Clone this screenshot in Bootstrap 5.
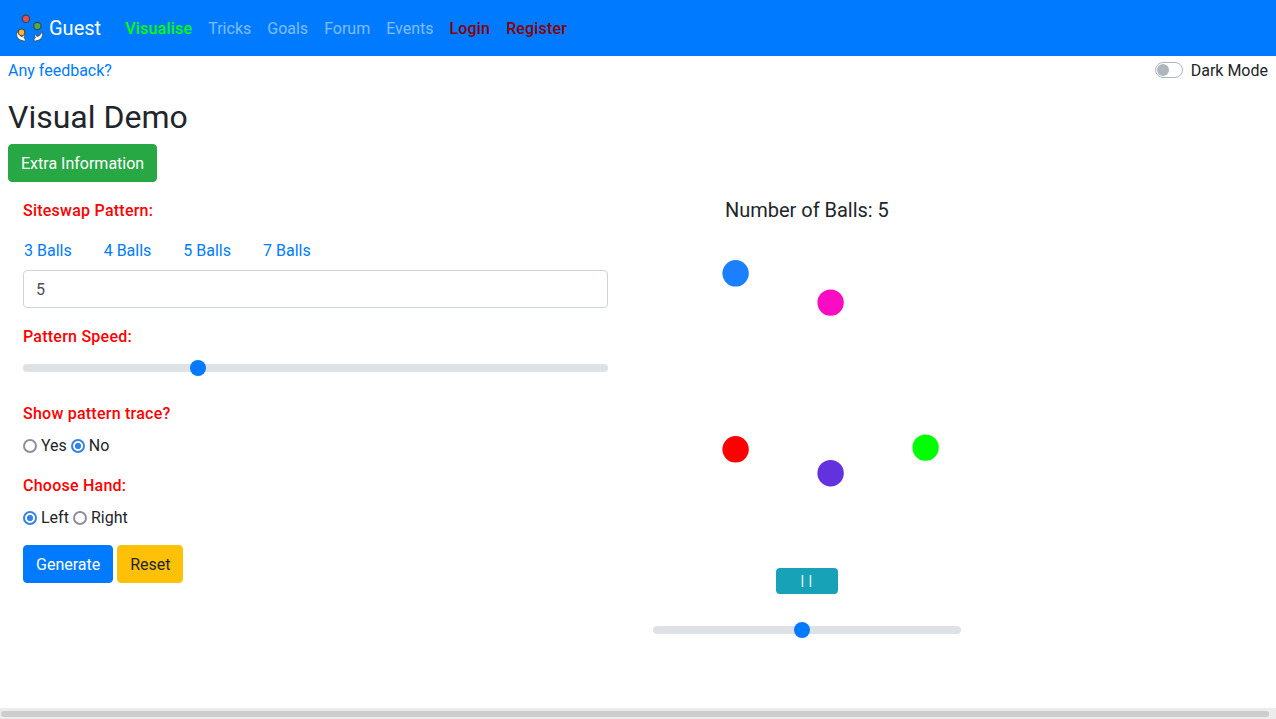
<!DOCTYPE html>
<html lang="en">
<head>
<meta charset="utf-8">
<meta name="viewport" content="width=device-width, initial-scale=1">
<title>Visual Demo</title>
<link rel="stylesheet" href="https://cdn.jsdelivr.net/npm/bootstrap@5.3.0/dist/css/bootstrap.min.css">
<style>
  body { font-family: Roboto, sans-serif; color: #212529; height: 100vh; overflow: hidden; }
  a { color: #007bff; text-decoration: none; }
  .topbar { background: #007bff; height: 56px; padding: 0 16px; }
  .topbar .navbar-brand { color: #fff; font-size: 20px; line-height: 30px; margin-right: 16px; }
  .topbar .navbar-brand svg { margin-right: 5px; }
  .topbar .navbar-nav .nav-link { color: rgba(255,255,255,.5); padding: 9px 8px 7px; }
  .topbar .navbar-nav .nav-link.current { color: #0f0; font-weight: 500; letter-spacing: .22px; }
  .topbar .navbar-nav .nav-link.account { color: #8b0000; font-weight: 500; letter-spacing: .16px; }
  .topline { height: 42px; padding-top: 3px; }
  .toggle { width: 28px; height: 16px; border: 1px solid #adb5bd; border-radius: 8px; padding: 1px; margin-top: -2px; }
  .toggle::before { content: ""; display: block; width: 12px; height: 12px; border-radius: 50%; background: #adb5bd; }
  h2 { font-size: 32px; line-height: 38px; margin: 0 0 8px; font-weight: 400; }
  .btn { border-radius: 4px; padding: 7px 12px 5px; }
  .btn-success { background: #28a745; border-color: #28a745; }
  .btn-primary { background: #007bff; border-color: #007bff; }
  .btn-warning { background: #ffc107; border-color: #ffc107; color: #212529; width: 66px; }
  .settings { padding: 0 30px 0 15px; }
  .heading { color: #f00; font-weight: 500; letter-spacing: .24px; line-height: 26px; height: 24px; display: block; }
  .trace-heading { margin-top: 21px; }
  .presets { gap: 32px; padding-left: 1px; margin: 17px 0 7px; }
  .form-control { border: 1px solid #ced4da; border-radius: 4px; color: #495057; height: 38px; }
  .form-range { display: block; }
  .form-range::-webkit-slider-thumb { background: #007bff; }
  .form-range::-webkit-slider-runnable-track { background: #dee2e6; }
  .choices { height: 24px; }
  .choices label { padding-top: 2px; }
  .choices input { appearance: none; width: 14px; height: 14px; border: 2px solid #8f8f9d; border-radius: 50%; margin: -1px 4px 0 0; background: #fff; }
  .choices input:checked { border-color: #3584e4; background: radial-gradient(circle, #3584e4 2.8px, #fff 3.4px); }
  .choices label + label { margin-left: 4px; }
  .preview { padding-left: 15px; }
  .counter { font-size: 20px; line-height: 24px; margin-left: 72px; letter-spacing: -.02px; }
  .stage { display: block; width: 308px; height: 346px; }
  .pause { width: 62px; height: 26px; background: #17a2b8; border: 0; border-radius: 4px; margin: 0 0 24px 123px; padding: 0; }
  .pause:hover { background: #17a2b8; }
  .speed { width: 308px; }
  .scrollrail { height: 11px; background: #ececec; padding: 3px 7px 2px 1px; }
  .scrollrail div { height: 6px; border-radius: 3px; background: #cdcdcd; }
</style>
</head>
<body class="d-flex flex-column">
<nav class="navbar navbar-expand topbar flex-shrink-0">
  <a class="navbar-brand d-flex align-items-center py-0" href="#">
    <svg width="28" height="30" viewBox="0 0 28 30" stroke="#384653" stroke-width="1.2" stroke-linejoin="round">
      <circle cx="9.9" cy="5.8" r="3.700" fill="#e04f5a"/>
      <circle cx="21.4" cy="13" r="3.700" fill="#4fab4b"/>
      <circle cx="5.5" cy="19.400" r="3.400" fill="#fdb62f"/>
      <g id="hand" fill="#fff" stroke-width=".9">
        <path d="M.9 18.800C-.1 22 1.400 25.700 4 26.900L8.200 28.200C9.800 28 9.600 26.700 8.700 25.600L7.900 24.400C9.200 23 9 21.300 8 21.600L6.300 23.500C4.200 23.300 2.700 21.500 1.900 19.500C1.600 18.900 1.200 18.600.9 18.800Z"/>
      </g>
      <use href="#hand" transform="matrix(-1 0 0 1 27.300 0)"/>
    </svg>Guest</a>
  <div class="navbar-nav">
    <a class="nav-link current" href="#">Visualise</a>
    <a class="nav-link" href="#">Tricks</a>
    <a class="nav-link" href="#">Goals</a>
    <a class="nav-link" href="#">Forum</a>
    <a class="nav-link" href="#">Events</a>
    <a class="nav-link account" href="#">Login</a>
    <a class="nav-link account" href="#">Register</a>
  </div>
</nav>
<main class="px-2 flex-grow-1">
  <div class="topline d-flex justify-content-between align-items-start">
    <a href="#">Any feedback?</a>
    <div class="d-flex align-items-center gap-2"><span class="toggle"></span>Dark Mode</div>
  </div>
  <h2>Visual Demo</h2>
  <button class="btn btn-success d-block">Extra Information</button>
  <div class="row g-0 pt-3">
    <form class="col-6 settings">
      <label class="heading" for="pattern">Siteswap Pattern:</label>
      <div class="presets d-flex"><a href="#">3 Balls</a><a href="#">4 Balls</a><a href="#">5 Balls</a><a href="#">7 Balls</a></div>
      <input id="pattern" class="form-control mb-3" value="5">
      <label class="heading mb-2" for="rate">Pattern Speed:</label>
      <input id="rate" type="range" class="form-range" min="0" max="1000" value="293">
      <span class="heading trace-heading">Show pattern trace?</span>
      <div class="choices d-flex mt-2"><label class="d-flex align-items-center"><input type="radio" name="trace">Yes</label><label class="d-flex align-items-center"><input type="radio" name="trace" checked>No</label></div>
      <span class="heading mt-3">Choose Hand:</span>
      <div class="choices d-flex mt-2"><label class="d-flex align-items-center"><input type="radio" name="hand" checked>Left</label><label class="d-flex align-items-center"><input type="radio" name="hand">Right</label></div>
      <div class="d-flex gap-1 mt-3"><button type="button" class="btn btn-primary">Generate</button><button type="button" class="btn btn-warning">Reset</button></div>
    </form>
    <section class="col-6 preview">
      <div class="counter">Number of Balls: 5</div>
      <svg class="stage" viewBox="0 0 308 346">
        <circle cx="82.600" cy="51.300" r="13.200" fill="#1a80ff"/>
        <circle cx="177.600" cy="80.600" r="13.200" fill="#fb0bc1"/>
        <circle cx="82.600" cy="227.300" r="13.200" fill="#f00"/>
        <circle cx="177.600" cy="251.200" r="13.200" fill="#6232de"/>
        <circle cx="272.600" cy="225.600" r="13.200" fill="#0f0"/>
      </svg>
      <button type="button" class="btn btn-info pause d-flex align-items-center justify-content-center" aria-label="Pause">
        <svg width="12" height="12" viewBox="0 0 12 12"><path d="M1.500 0v12M9.500 0v12" stroke="#fff" stroke-width="1.500" opacity=".85"/></svg>
      </button>
      <input type="range" class="form-range speed" min="0" max="1000" value="483" aria-label="Playback speed">
    </section>
  </div>
</main>
<div class="scrollrail flex-shrink-0"><div></div></div>
<script src="https://cdn.jsdelivr.net/npm/bootstrap@5.3.0/dist/js/bootstrap.bundle.min.js"></script>
</body>
</html>
